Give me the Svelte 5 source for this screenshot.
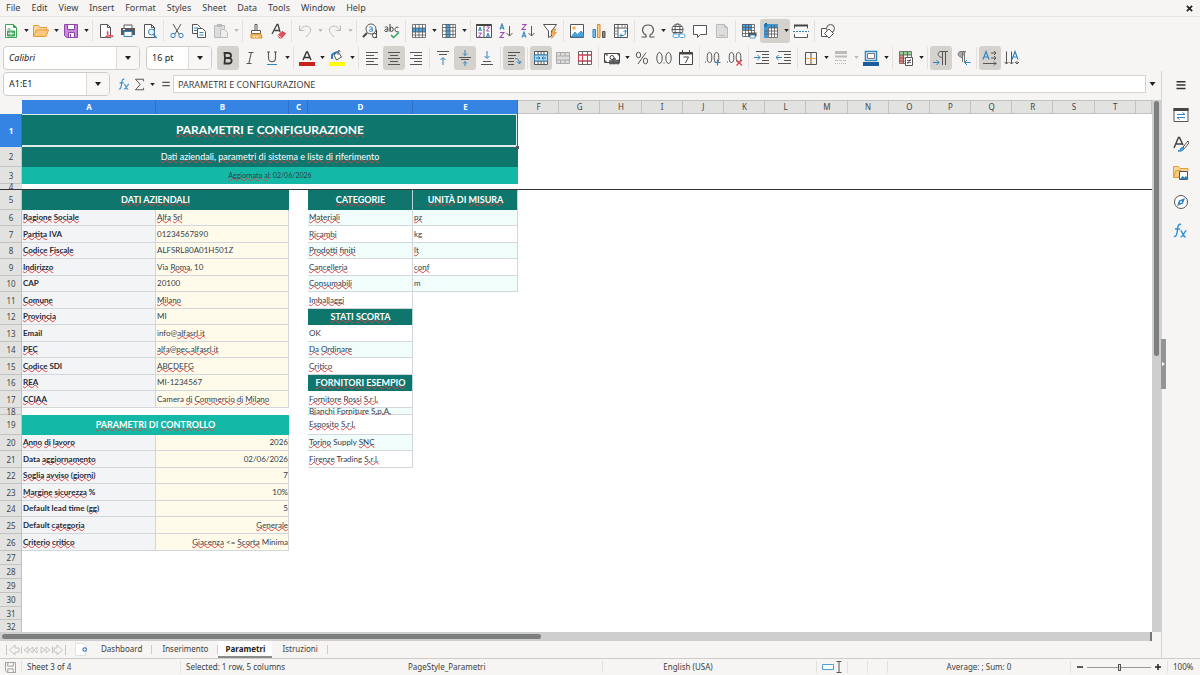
<script>
    const menus = ["File", "Edit", "View", "Insert", "Format", "Styles", "Sheet", "Data", "Tools", "Window", "Help"];

    // 16x16 drawings, keyed by command
    const icons = {
        new: '<path d="M2.500 1.500h8l3 3v10h-11z" fill="#fff" stroke="#3fa35b"/><path d="M10.500 1.500v3h3" fill="#3fa35b" stroke="#3fa35b"/><path d="M4.500 6h3M4.500 8h7v5h-7z" fill="#66b97c" stroke="#2e9c4c"/><path d="M5 10.500h6M8 8.500v4" stroke="#fff" stroke-width=".7"/>',
        open: '<path d="M.5 13V2.500h5l1.500 2h6.500V7" fill="#fcd79a" stroke="#e59a3c"/><path d="M.5 13.500 3.500 7H15.500l-2.500 6.500z" fill="#fbc97e" stroke="#e59a3c"/>',
        save: '<path d="M1.500 1.500h13v13h-11l-2-2z" fill="#c58bd6" stroke="#8e44a8"/><path d="M4.500 1.500h7v5h-7zM5.500 14v-4.500h6V14" fill="#fff" stroke="#8e44a8"/><path d="M7.500 11v3" stroke="#8e44a8"/>',
        pdf: '<path d="M2.500 1.500h7l3 3v10h-10z" fill="#fff" stroke="#555"/><path d="M9.500 1.500v3h3" fill="none" stroke="#555"/><path d="M7 14.500c2-1 3.500-4 3-6-.8-1-1.500 1 0 3s3.500 3 5 2c0-2-4-1-8 1z" fill="#fff" stroke="#d8394a"/>',
        print: '<path d="M4 5V2h8v3" fill="#fff" stroke="#555"/><path d="M1 5h14v7H1z" fill="#5a5a5a"/><path d="M4 8.500h8v5H4z" fill="#fff" stroke="#2f84c0"/><path d="M3 6.500h2" stroke="#fff"/>',
        preview: '<path d="M2.500 1.500h7l3 3v10h-10z" fill="#fff" stroke="#555"/><path d="M9.500 1.500v3h3" fill="none" stroke="#555"/><circle cx="9.500" cy="9" r="3" fill="#e8f4fc" stroke="#2f84c0"/><path d="m11.500 11.500 3 3.500" stroke="#2f84c0" stroke-width="1.500"/>',
        cut: '<path d="M4 1l6 10M12 1 6 11" stroke="#555" fill="none"/><circle cx="4" cy="12.500" r="2.200" fill="none" stroke="#2f84c0"/><circle cx="12" cy="12.500" r="2.200" fill="none" stroke="#2f84c0"/>',
        copy: '<path d="M1.500 1.500h5l3 3v6h-8z" fill="#fff" stroke="#555"/><path d="M3 5h4M3 7.500h3" stroke="#2f84c0"/><path d="M6.500 5.500h5l3 3v6h-8z" fill="#fff" stroke="#555"/><path d="M8.500 9.500h4M8.500 12h4" stroke="#2f84c0"/>',
        paste: '<path d="M1.500 2.500h10v12h-10z" fill="#ddd" stroke="#bbb"/><path d="M4 1h5v3H4z" fill="#bbb"/><path d="M7.500 6.500h4l3 3v5h-7z" fill="#eee" stroke="#bbb"/>',
        brush: '<path d="M7 1.500h2v6H7z" fill="#fff" stroke="#555"/><path d="M3.500 7.500h9v3h-9z" fill="#fff" stroke="#555"/><path d="M3 11h10l1 4H3z" fill="#f9c26b" stroke="#e08a1e"/><path d="M6 15v-2M9 15v-2" stroke="#fff"/>',
        clear: '<path d="m2 11 5-9.500h1L10 9M4.500 7.500h5" fill="none" stroke="#444" stroke-width="1.300"/><path d="m8 12.500 4-4 3.500 2-4 4.500h-2z" fill="#e0555f" stroke="#d03040"/><path d="m8 12.500 3 2" stroke="#fff"/>',
        undo: '<path d="M2.500 2.500v5h5M3 7c3-5 9-5 10.500-1 .7 3-2 5-4.500 8" fill="none" stroke="#bbb"/>',
        redo: '<path d="M13.500 2.500v5h-5M13 7C10 2 4 2 2.500 6c-.7 3 2 5 4.500 8" fill="none" stroke="#bbb"/>',
        find: '<circle cx="9" cy="6" r="5" fill="#fff" stroke="#555"/><path d="m5 10-4 4" stroke="#444" stroke-width="2"/><path d="M7 4.500c1-1 3-1 3.300.5v3.500M10 6C7 6 6.500 8.500 8.500 8.500c1 0 1.500-.5 1.700-1" fill="none" stroke="#2f84c0"/><path d="M14.500 7v8" stroke="#444"/><ellipse cx="12.500" cy="12.500" rx="2" ry="2.300" fill="#fff" stroke="#444"/>',
        spell: '<path d="M.8 4.500c1-1 3-1 3 .6V8.500M3.800 6C0 6 0 8.500 2 8.500q1.300 0 1.800-1M6 1v7.500M14.500 4.500c-2-1-3.500 0-3.500 2s1.500 3 3.500 2" fill="none" stroke="#444"/><ellipse cx="7.600" cy="6.300" rx="1.600" ry="2.200" fill="none" stroke="#444"/><path d="m7 12 2.500 2.500L15 9.500" fill="none" stroke="#2fa866" stroke-width="1.600"/>',
        row: '<path d="M1.500 1.500h13v13h-13z" fill="#fff"/><path d="M1 5h14v4H1z" fill="#4aa3df"/><path d="M1.500 1.500h13v13h-13zM1.500 5h13M1.500 9h13M1.500 12h13M4.500 1.500v13M8 1.500v13M11.500 1.500v13" fill="none" stroke="#555" stroke-width=".8"/>',
        col: '<path d="M1.500 1.500h13v13h-13z" fill="#fff"/><path d="M5 1h4v14H5z" fill="#4aa3df"/><path d="M1.500 1.500h13v13h-13zM5 1.500v13M9 1.500v13M12 1.500v13M1.500 4.500h13M1.500 8h13M1.500 11.500h13" fill="none" stroke="#555" stroke-width=".8"/>',
        sort: '<path d="M.5 1.500h15v13H.5zM8 1.500v13" fill="#fff" stroke="#555"/><path d="M.5 2h15" stroke="#444" stroke-width="2"/><path d="m2.500 8 1.500-4 1.500 4M3 7h2M10.500 14l1.500-4 1.500 4M11 13h2" fill="none" stroke="#2f84c0"/><path d="M2.500 10h3l-3 4h3M10.500 4h3l-3 4h3" fill="none" stroke="#a347ba"/>',
        asc: '<path d="M2 6.500 4 1l2 5.500M2.500 5h3" fill="none" stroke="#2f84c0" stroke-width="1.100"/><path d="M2 9.500h4l-4 5h4" fill="none" stroke="#a347ba" stroke-width="1.100"/><path d="M11.500 3v10M8.500 10l3 3 3-3" fill="none" stroke="#555"/>',
        desc: '<path d="M2 1.500h4l-4 5h4" fill="none" stroke="#a347ba" stroke-width="1.100"/><path d="M2 14.500 4 9l2 5.500M2.500 13h3" fill="none" stroke="#2f84c0" stroke-width="1.100"/><path d="M11.500 3v10M8.500 10l3 3 3-3" fill="none" stroke="#555"/>',
        filter: '<path d="M1.500 1.500h13L9.500 8v5l-3 1.500V8z" fill="#fff" stroke="#555"/><path d="M12 6 9 11h2.500L9.500 15.500 14.500 9.500H12L14 6z" fill="#f6b25b" stroke="#e08a1e" stroke-width=".7"/>',
        image: '<path d="M1.500 1.500h13v13h-13z" fill="#fff" stroke="#555"/><circle cx="5" cy="5" r="1.800" fill="#f3b057"/><path d="m2 14 4-5 2.500 2.500L12 8l2.500 3v3z" fill="#4aa3df" stroke="#2f84c0" stroke-width=".7"/>',
        chart: '<path d="M2 6.500h2.500v8H2z" fill="#7ec0ee" stroke="#2f84c0"/><path d="M6.500 1.500H9v13H6.500z" fill="#fcd08b" stroke="#e08a1e"/><path d="M11.500 8.500H14v6h-2.500z" fill="#888" stroke="#555"/>',
        pivot: '<path d="M1.500 1.500h13v13h-13zM1.500 5h13M5 1.500v13" fill="#fff" stroke="#555"/><path d="M9 1.500V5M12 1.500V5M1.500 8H5M1.500 11H5" stroke="#888"/><path d="M7 12.500h3c2 0 2.500-1.500 2.500-4.500M9 10.500 7 12.500l2 2M10.500 9l2-2 2 2" fill="none" stroke="#2f84c0"/>',
        omega: '<path d="M1.500 14H6v-2C.5 9 2 2 8 2s7.500 7 2 10v2h4.500" fill="none" stroke="#555" stroke-width="1.200"/>',
        link: '<circle cx="7.500" cy="6.500" r="5.500" fill="#fff" stroke="#555"/><ellipse cx="7.500" cy="6.500" rx="2.500" ry="5.500" fill="none" stroke="#555"/><path d="M2 6.500h11M3 3.500h9M3 9.500h9" stroke="#555"/><rect x="3" y="11" width="6" height="3.500" rx="1.700" fill="#fff" stroke="#4aa3df"/><rect x="9" y="11" width="6" height="3.500" rx="1.700" fill="#fff" stroke="#4aa3df"/>',
        comment: '<path d="M1.500 2.500h13v9h-6l-3 3v-3h-4z" fill="#fff" stroke="#555"/>',
        header: '<path d="M2.500 1.500h8l3 3v10h-11z" fill="#ddd" stroke="#bbb"/><path d="M10.500 1.500v3h3M5 12.500h6" fill="none" stroke="#bbb"/>',
        area: '<path d="M1.500 1.500h12v12h-12z" fill="#fff"/><path d="M1 1h9v6H1z" fill="#4aa3df"/><path d="M1.500 1.500h12v12h-12zM1.500 4.500h12M1.500 7.500h12M1.500 10.500h12M4.500 1.500v12M7.500 1.500v12M10.500 1.500v12" fill="none" stroke="#555" stroke-width=".8"/><path d="M7.500 9.500h8v4h-8z" fill="#555"/><path d="M9 12h5v3H9z" fill="#fff" stroke="#2f84c0" stroke-width=".8"/>',
        freeze: '<path d="M1.500 1.500h13v13h-13z" fill="#fff"/><path d="M1 1h14v4H1zM1 1h4v14H1z" fill="#3f97d3"/><path d="M5.500 5h9v9.500h-9zM8.500 2v12M11.500 2v12M1.500 8h13M1.500 11h13" fill="none" stroke="#555" stroke-width=".8"/><path d="m3 0 0 3M1.500 1.500 3 0l1.500 1.500M1 3h3" fill="none" stroke="#165f93"/>',
        split: '<path d="M1.500 5.500v-3h13v3M1.500 11v3.500h13V11" fill="#fff" stroke="#555"/><path d="M1 2.500h14" stroke="#444" stroke-width="2"/><path d="M0 8.500h16" stroke="#2f84c0" stroke-dasharray="2 1"/>',
        shapes: '<path d="M1.500 5.500h8v8h-8z" fill="#fff" stroke="#555"/><circle cx="10.500" cy="5.500" r="4" fill="#f6f5f4" stroke="#555"/><path d="m9 6 4.500 4.500L9 15l-4.500-4.500z" fill="#fff" stroke="#555"/>',
        bold: '<path d="M4.500 3H8c4 0 4 5 .5 5H5zM5 8h3.500c4.500 0 4 5.500 0 5.500h-4z" fill="none" stroke="#333" stroke-width="1.800"/>',
        italic: '<path d="M6.500 2.500h5M4.500 13.500h5M9.300 2.500l-2.500 11" fill="none" stroke="#555" stroke-width="1.100"/>',
        underline: '<path d="M4.500 2v6c0 5 7 5 7 0V2M3 2h3M10 2h3" fill="none" stroke="#555" stroke-width="1.100"/><path d="M3 14.500h10" stroke="#2f84c0"/>',
        color: '<path d="M4 10 7.500 2h1L12 10M5.500 7.500h5" fill="none" stroke="#333" stroke-width="1.400"/><path d="M0 12h16v4H0z" fill="#c9211e"/>',
        fill: '<path d="M0 12h16v4H0z" fill="#ff0"/><path d="m5 5 4-3.500L12.500 7l-5 3z" fill="#fff" stroke="#555"/><path d="M9 5V1c1-1.500 2-.5 2 1" fill="none" stroke="#555"/><path d="M3 9V5c0-1.500 3-2 5-3" fill="none" stroke="#1e73b5" stroke-width="1.800"/>',
        left: '<path d="M2 2.500h12M2 5.500h8M2 8.500h12M2 11.500h8M2 14.500h12" stroke="#555"/>',
        center: '<path d="M2 2.500h12M4 5.500h8M2 8.500h12M4 11.500h8M2 14.500h12" stroke="#555"/>',
        right: '<path d="M2 2.500h12M6 5.500h8M2 8.500h12M6 11.500h8M2 14.500h12" stroke="#555"/>',
        top: '<path d="M2 1.500h12M4 4.500h8" stroke="#555"/><path d="M8 15V8M5.500 10 8 7.500l2.500 2.500" fill="none" stroke="#2f84c0"/>',
        middle: '<path d="M2 7.500h12M4 9.500h8" stroke="#555"/><path d="M8 0v5.500M6 3.500l2 2 2-2M8 16.500v-5M6 13.500l2-2 2 2" fill="none" stroke="#2f84c0"/>',
        bottom: '<path d="M4 11.500h8M2 14.500h12" stroke="#555"/><path d="M8 1v7M5.500 6 8 8.500 10.500 6" fill="none" stroke="#2f84c0"/>',
        wrap: '<path d="M2 2.500h12M2 5.500h8M2 8.500h6M2 11.500h6M2 14.500h6" stroke="#555"/><path d="M9 8.500c3 0 4 1 4.500 5M11 11.500l2.500 2.500 1.500-3" fill="none" stroke="#2f84c0"/>',
        merge: '<path d="M1.500 1.500h13v13h-13z" fill="#fff" stroke="#555"/><path d="M1.500 5h13M1.500 11h13M5 1.500V5M11 1.500V5M5 11v3.500M8 11v3.500M11 11v3.500M8 1.500V5" stroke="#555"/><path d="M1.500 5h13v6h-13z" fill="#b5dbf5" stroke="#2f84c0"/><path d="M3 8h4M9 8h4M5.500 6.500 7 8 5.500 9.500M10.500 6.500 9 8l1.500 1.500" fill="none" stroke="#1e73b5"/>',
        center2: '<path d="M1.500 2.500h13v11h-13zM1.500 6h13M1.500 10h13M5.500 2.500V6M10 2.500V6M5.500 10v3.500M10 10v3.500" fill="#ddd" stroke="#aaa"/>',
        unmerge: '<path d="M1.500 1.500h13v13h-13zM1.500 5h13M1.500 11h13M5.500 1.500v13M10.500 1.500v13" fill="#fff" stroke="#666"/><path d="M1.500 5h13v6h-13zM5.500 5v6M10.500 5v6" fill="none" stroke="#d8394a"/>',
        money: '<path d="M.5 3.500h15v9H.5z" fill="#fff" stroke="#444"/><circle cx="8" cy="7.500" r="2" fill="none" stroke="#444"/><path d="M1 4h2v2M15 6V4h-2M1 10v2h2" fill="none" stroke="#444"/><path d="M5.500 10.500h3V14h-3zM9 8.500h2.500V14H9zM12.500 10H15v4h-2.500z" fill="#666" stroke="#444" stroke-width=".6"/>',
        percent: '<ellipse cx="4.500" cy="5" rx="2.200" ry="2.800" fill="none" stroke="#555"/><ellipse cx="11.500" cy="11" rx="2.200" ry="2.800" fill="none" stroke="#555"/><path d="m12 2.500-8 11.500" stroke="#555"/>',
        number: '<ellipse cx="3.500" cy="8" rx="2.700" ry="5.500" fill="none" stroke="#555"/><ellipse cx="12.500" cy="8" rx="2.700" ry="5.500" fill="none" stroke="#555"/><path d="M7.500 12.500h1v1h-1z" fill="#444"/>',
        date: '<path d="M1.500 2.500h13v12h-13z" fill="#fff" stroke="#444"/><path d="M1.500 3.500h13" stroke="#444" stroke-width="2"/><path d="M4.500 0v3M11.500 0v3M5.500 7h5l-3 6" fill="none" stroke="#444"/>',
        addDec: '<path d="M0 11.500h1v1H0z" fill="#444"/><ellipse cx="4.500" cy="7.500" rx="2.300" ry="5" fill="none" stroke="#555"/><ellipse cx="11.500" cy="7.500" rx="2.300" ry="5" fill="none" stroke="#555"/><path d="M9.500 12.500h6M12.500 9.500v6" stroke="#2f84c0" stroke-width="1.200"/>',
        delDec: '<path d="M0 11.500h1v1H0z" fill="#444"/><ellipse cx="4.500" cy="7.500" rx="2.300" ry="5" fill="none" stroke="#555"/><ellipse cx="11.500" cy="7.500" rx="2.300" ry="5" fill="none" stroke="#555"/><path d="m9.500 10 5.500 5.500M15 10l-5.500 5.500" stroke="#e0404a" stroke-width="1.200"/>',
        indent: '<path d="M2 1.500h13M8 4.500h7M8 7.500h7M8 10.500h7M2 13.500h13" stroke="#555"/><path d="M0 7.500h6M3.500 5 6 7.500 3.500 10" fill="none" stroke="#2f84c0"/>',
        outdent: '<path d="M2 1.500h13M8 4.500h7M8 7.500h7M8 10.500h7M2 13.500h13" stroke="#555"/><path d="M0 7.500h6M2.500 5 0 7.500 2.500 10" fill="none" stroke="#2f84c0"/>',
        borders: '<path d="M2.500 2.500h11v12h-11zM8 2.500v12" fill="none" stroke="#555"/><path d="M3 8.500h10M8 9v5" stroke="#f0a24a"/>',
        lines: '<path d="M2 2.500h12" stroke="#bbb" stroke-width="3"/><path d="M2 6.500h12" stroke="#bbb" stroke-width="2"/><path d="M2 10.500h12" stroke="#bbb" stroke-dasharray="3 1"/><path d="M2 13.500h12" stroke="#bbb" stroke-dasharray="1 1"/>',
        lineColor: '<path d="M2.500 1.500h11v9h-11z" fill="#fff" stroke="#2f84c0" stroke-width="1.500"/><path d="M4.500 3.500h7v5h-7z" fill="#fff" stroke="#777"/><path d="M0 12h16v4H0z" fill="#1c5c99"/>',
        cond: '<path d="M1.500 1.500h12v12h-12z" fill="#fff"/><path d="M2 2h11v3H2z" fill="#8ed08f"/><path d="M2 5h4v8H2z" fill="#f0837f"/><path d="M1.500 1.500h12v12h-12zM1.500 5h12M1.500 8h12M1.500 11h12M5.500 1.500v12M9.500 1.500v12" fill="none" stroke="#555" stroke-width=".8"/><path d="M7.500 7.500h7v8h-7z" fill="#fff" stroke="#555"/><path d="M9 10.500h4M9 12.500h4M12.500 9l-3 5" stroke="#444" stroke-width=".8"/>',
        ltr: '<path d="M9.500 1.500V15M12.500 1.500V15M15 1.500H8c-4 0-4 6 1.500 6" fill="none" stroke="#555"/><path d="M0 12.500h6M3.500 10 6 12.500 3.500 15" fill="none" stroke="#2f84c0"/>',
        rtl: '<path d="M7.500 1.500V12M9.500 1.500V12M11 1.500H6c-4 0-4 6 1.500 6" fill="#aaa" stroke="#777"/><path d="M9.500 12.500h6M12 10l-2.500 2.500L12 15" fill="none" stroke="#2f84c0"/>',
        textLtr: '<path d="M1 9.500 4 1.500l3 8M2 7h4" fill="none" stroke="#2f84c0" stroke-width="1.200"/><path d="M9 3h5M12 1l2 2-2 2M9 8h5M12 6l2 2-2 2M1 13.500h13M12 11.500l2 2-2 2" fill="none" stroke="#555"/>',
        textTtb: '<path d="m8 9.500 3-8 3 8M9 7h4" fill="none" stroke="#2f84c0" stroke-width="1.200"/><path d="M2.500 1.500V14M.5 12l2 2 2-2M7.500 1.500V14M5.500 12l2 2 2-2M13 11v3M11 12l2 2 2-2" fill="none" stroke="#555"/>',
        fx: '<path d="M8 1.500c-3-1-3 2-3.500 5S4 14 1 13.500M2 6h5M7.500 7.500c2 0 2 6.500 5 6.500M13.500 7.500c-2 0-3 6.500-6 6.500" fill="none" stroke="#2f8fd5" stroke-width="1.400"/>',
        sigma: '<path d="M13 4V1.500H3L9 8l-6 6.500h10V12" fill="none" stroke="#555" stroke-width="1.200"/>',
        equals: '<path d="M2 5.500h12M2 10.500h12" stroke="#555" stroke-width="2"/>',
        burger: '<path d="M2 3.500h12M2 8h12M2 12.500h12" stroke="#333" stroke-width="2"/>',
        props: '<path d="M1 1.500h14v13H1z" fill="#fff" stroke="#555"/><path d="M.5 2.500h15" stroke="#444" stroke-width="3"/><path d="M4 7.500h8M4 10.500h8M9.500 5.500l2.500 2M6.500 12.500 4 10.500" stroke="#2f84c0"/>',
        stylesPane: '<path d="m1 12 4.500-10.500h1L10 9M3 8h6" fill="none" stroke="#444" stroke-width="1.500"/><path d="m15 5-5 6 1.500 1.500L16 7z" fill="#fff" stroke="#555"/><path d="M5 15c3 0 2-4 5-3.500 2 1 0 4.500-5 3.500z" fill="#4aa3df" stroke="#2f84c0"/>',
        gallery: '<path d="M.5 12.500v-11h5l1.500 2h8V6" fill="#fcd79a" stroke="#e59a3c"/><path d="M.5 12.500 3 5.500h5v7z" fill="#fbc97e" stroke="#e59a3c"/><path d="M6.500 6.500h8v8h-8z" fill="#fff" stroke="#555"/><path d="m7 14 2.500-3 2 1.500L13 11l1.500 2v1.500z" fill="#2f84c0"/>',
        compass: '<circle cx="8" cy="8" r="6.500" fill="#fff" stroke="#555"/><path d="m12 4-2 5.500L4 12l2-5.500z" fill="#2f84c0"/><circle cx="8" cy="8" r="1" fill="#fff"/>',
    };

    // "|" is a separator; [name, flags]: d = drop-down arrow, a = active, x = disabled
    const standardBar = [
        ["new", "d"], ["open", "d"], ["save", "d"], "|", ["pdf"], ["print"], ["preview"], "|",
        ["cut"], ["copy"], ["paste", "dx"], "|", ["brush"], ["clear"], "|", ["undo", "dx"], ["redo", "dx"], "|",
        ["find"], ["spell"], "|", ["row", "d"], ["col", "d"], "|", ["sort"], ["asc"], ["desc"], ["filter"], "|",
        ["image"], ["chart"], ["pivot"], "|", ["omega", "d"], ["link"], ["comment"], ["header", "x"], "|",
        ["area"], ["freeze", "da"], ["split"], "|", ["shapes"],
    ];
    const formatBar = [
        ["bold", "a"], ["italic"], ["underline", "d"], "|", ["color", "d"], ["fill", "d"], "|",
        ["left"], ["center", "a"], ["right"], "|", ["top"], ["middle", "a"], ["bottom"], "|", ["wrap", "a"], "|",
        ["merge", "a"], ["center2", "x"], ["unmerge"], "|", ["money", "d"], ["percent"], ["number"], ["date"], "|",
        ["addDec"], ["delDec"], "|", ["indent"], ["outdent"], "|", ["borders", "d"], ["lines", "dx"], ["lineColor", "d"], "|",
        ["cond", "d"], "|", ["ltr", "a"], ["rtl"], "|", ["textLtr", "a"], ["textTtb"],
    ];
    const sidePanels = ["burger", "props", "stylesPane", "gallery", "compass", "fx"];

    const mainCols = ["A", "B", "C", "D", "E"];
    const otherCols = "FGHIJKLMNOPQRST".split("");

    // cells are [text, class, colspan]; words between underscores fail the spell check
    const none = ["", ""];
    const label = (t) => [t, "label"];
    const value = (t) => [t, "value"];
    const num = (t) => [t, "value end"];
    const mint = (t) => [t, "mint"];
    const plain = (t) => [t, "plain"];
    const head = (t) => [t, "head"];

    const rows = [
        [33, ["_PARAMETRI_ E _CONFIGURAZIONE_", "title", 5]],
        [20, ["_Dati_ _aziendali_, _parametri_ _di_ _sistema_ e _liste_ _di_ _riferimento_", "subtitle", 5]],
        [17, ["_Aggiornato_ _al_: 02/06/2026", "updated", 5]],
        [6, ["", "", 5]],
        [20, ["_DATI_ _AZIENDALI_", "section", 2], none, head("_CATEGORIE_"), head("_UNITÀ_ DI _MISURA_")],
        [16, label("_Ragione_ _Sociale_"), value("_Alfa_ _Srl_"), none, mint("_Materiali_"), mint("_pz_")],
        [17, label("_Partita_ IVA"), value("01234567890"), none, plain("_Ricambi_"), plain("kg")],
        [16, label("_Codice_ _Fiscale_"), value("ALFSRL80A01H501Z"), none, mint("_Prodotti_ _finiti_"), mint("_lt_")],
        [17, label("_Indirizzo_"), value("Via _Roma_, 10"), none, plain("_Cancelleria_"), plain("_conf_")],
        [16, label("CAP"), value("20100"), none, mint("_Consumabili_"), mint("m")],
        [17, label("_Comune_"), value("_Milano_"), none, plain("_Imballaggi_"), none],
        [16, label("_Provincia_"), value("MI"), none, head("_STATI_ _SCORTA_"), none],
        [17, label("Email"), value("info@_alfasrl.it_"), none, plain("OK"), none],
        [16, label("_PEC_"), value("_alfa_@_pec.alfasrl.it_"), none, mint("_Da_ _Ordinare_"), none],
        [17, label("_Codice_ SDI"), value("_ABCDEFG_"), none, plain("_Critico_"), none],
        [16, label("_REA_"), value("MI-1234567"), none, head("_FORNITORI_ _ESEMPIO_"), none],
        [17, label("_CCIAA_"), value("Camera _di_ _Commercio_ _di_ _Milano_"), none, plain("_Fornitore_ _Rossi_ _S.r.l._"), none],
        [7, none, none, none, mint("_Bianchi_ _Forniture_ _S.p.A._"), none],
        [20, ["_PARAMETRI_ DI _CONTROLLO_", "section teal", 2], none, plain("_Esposito_ _S.r.l._"), none],
        [16, label("_Anno_ _di_ _lavoro_"), num("2026"), none, mint("_Torino_ Supply _SNC_"), none],
        [17, label("Data _aggiornamento_"), num("02/06/2026"), none, plain("_Firenze_ Trading _S.r.l._"), none],
        [16, label("_Soglia_ _avviso_ (_giorni_)"), num("7"), ["", "", 3]],
        [17, label("_Margine_ _sicurezza_ %"), num("10%"), ["", "", 3]],
        [16, label("Default lead time (_gg_)"), num("5"), ["", "", 3]],
        [17, label("Default _categoria_"), num("_Generale_"), ["", "", 3]],
        [17, label("_Criterio_ _critico_"), num("_Giacenza_ <= _Scorta_ Minima"), ["", "", 3]],
        [14, ["", "", 5]],
        [14, ["", "", 5]],
        [14, ["", "", 5]],
        [14, ["", "", 5]],
        [13, ["", "", 5]],
        [14, ["", "", 5]],
    ];

    const tabs = ["Dashboard", "Inserimento", "Parametri", "Istruzioni"];
    let current = $state("Parametri");
    let fontName = $state("Calibri");
    let fontSize = $state("16 pt");
    let nameBox = $state("A1:E1");
    let formula = $state("PARAMETRI E CONFIGURAZIONE");
    let zoom = $state(50);
</script>

{#snippet icon(name)}
    <svg class="icon" viewBox="0 0 16 16" fill="none" aria-hidden="true">{@html icons[name]}</svg>
{/snippet}

{#snippet arrow()}
    <svg class="tri" viewBox="0 0 6 4" aria-hidden="true"><path d="M0 0h6L3 4z" fill="currentColor" /></svg>
{/snippet}

{#snippet tools(items)}
    {#each items as item}
        {#if item === "|"}
            <span class="sep"></span>
        {:else}
            {@const flags = item[1] ?? ""}
            <span class="tool" class:active={flags.includes("a")}>
                <button class="cmd" aria-label={item[0]} disabled={flags.includes("x")}>{@render icon(item[0])}</button>
                {#if flags.includes("d")}
                    <button class="drop" aria-label="{item[0]} options" disabled={flags.includes("x")}>{@render arrow()}</button>
                {/if}
            </span>
        {/if}
    {/each}
{/snippet}

<div class="app">
    <nav class="menubar">
        {#each menus as menu}
            <button>{menu}</button>
        {/each}
        <button class="close" aria-label="Close"><svg viewBox="0 0 8 8"><path d="m1 1 6 6M7 1 1 7" stroke="#222" stroke-width="2" /></svg></button>
    </nav>

    <div class="toolbar">{@render tools(standardBar)}</div>

    <div class="toolbar format">
        <div class="combo font">
            <input class="italic" aria-label="Font name" bind:value={fontName} />
            <button aria-label="Choose font">{@render arrow()}</button>
        </div>
        <div class="combo size">
            <input aria-label="Font size" bind:value={fontSize} />
            <button aria-label="Choose size">{@render arrow()}</button>
        </div>
        {@render tools(formatBar)}
    </div>

    <div class="work">
        <main>
            <div class="formula">
                <div class="combo name">
                    <input aria-label="Name box" bind:value={nameBox} />
                    <button aria-label="Choose range">{@render arrow()}</button>
                </div>
                <button class="fbtn" aria-label="Function wizard">{@render icon("fx")}</button>
                <button class="fbtn" aria-label="Sum">{@render icon("sigma")}</button>
                <button class="drop" aria-label="Sum options">{@render arrow()}</button>
                <button class="fbtn equals" aria-label="Formula">{@render icon("equals")}</button>
                <input class="line" aria-label="Formula input" bind:value={formula} />
                <button class="expand" aria-label="Expand formula bar">{@render arrow()}</button>
            </div>

            <div class="grid">
                <div class="sheet">
                    <table>
                        <colgroup>
                            <col class="c-row" /><col class="c-a" /><col class="c-b" /><col class="c-c" /><col class="c-d" /><col class="c-e" />
                            {#each otherCols as _}<col />{/each}
                            <col class="c-last" />
                        </colgroup>
                        <thead>
                            <tr>
                                <td class="corner"></td>
                                {#each mainCols as c}<th class="on">{c}</th>{/each}
                                {#each otherCols as c}<th>{c}</th>{/each}
                                <td class="rest"></td>
                            </tr>
                        </thead>
                        <tbody>
                            {#each rows as [height, ...cells], i}
                                <tr class:frozen={i === 3} style:--h="{height}px">
                                    <th class:on={i === 0}><div class="cell">{i + 1}</div></th>
                                    {#each cells as [text, kind, span]}
                                        <td colspan={span ?? 1} class={kind}>
                                            <div class="cell"><span>{#each text.split("_") as part, k}{#if k % 2}<u>{part}</u>{:else}{part}{/if}{/each}</span></div>
                                        </td>
                                    {/each}
                                    <td colspan="16"></td>
                                </tr>
                            {/each}
                        </tbody>
                    </table>
                </div>
                <div class="vscroll"><div></div></div>
            </div>
            <div class="hscroll"><div></div></div>

            <div class="tabs">
                <button class="navs" aria-label="Scroll sheets">
                    <svg viewBox="0 0 62 12" fill="none" stroke="#c4c4c2">
                        <path d="M1.500 1v10M10 1 4.500 6 10 11V8h4V4h-4zM16.500 2.500v7M23 3l-4 3 4 3zM28 3l-4 3 4 3zM32 3l-3 3 3 3zM36 3l4 3-4 3zM41 3l4 3-4 3zM47.500 2.500v7M52 1l5.500 5L52 11V8h-3V4h3zM60.500 1v10" />
                    </svg>
                </button>
                <button class="add" aria-label="Add sheet">
                    <svg viewBox="0 0 14 14">
                        <path d="M.5 .5h9l2 2v11H.5z" fill="#fff" stroke="#ddd" />
                        <circle cx="10.500" cy="7" r="2.500" fill="#3b74b8" />
                        <path d="M9 7h3M10.500 5.500v3" stroke="#fff" />
                    </svg>
                </button>
                {#each tabs as tab}
                    <button class="tab" class:current={tab === current} onclick={() => (current = tab)}>{tab}</button>
                {/each}
            </div>
        </main>

        <aside>
            <button class="handle" aria-label="Hide sidebar"></button>
            {#each sidePanels as panel}
                <button class="panel" aria-label={panel}>{@render icon(panel)}</button>
            {/each}
        </aside>
    </div>

    <footer>
        <span>
            <svg class="saved" viewBox="0 0 12 12" fill="none" stroke="#999"><path d="M.5.5h11v11h-9l-2-2zM3 .5v4h6v-4M3 11.500v-4h6v4" /></svg>
        </span>
        <span>Sheet 3 of 4</span>
        <span class="open">Selected: 1 row, 5 columns</span>
        <span>PageStyle_Parametri</span>
        <span class="language">English (USA)</span>
        <span>
            <svg class="mode" viewBox="0 0 20 12" fill="none"><path d="M.5 3.500h11v5H.5z" fill="#fff" stroke="#4a9fd0" /><path d="M14.500.5h5M14.500 11.500h5M17 .5v11" stroke="#555" /></svg>
        </span>
        <span></span>
        <span></span>
        <span class="sum">Average: ; Sum: 0</span>
        <span class="zoom">
            <button aria-label="Zoom out"><svg viewBox="0 0 8 8"><path d="M1 4h6" stroke="#222" stroke-width="1.500" /></svg></button>
            <input type="range" min="0" max="100" aria-label="Zoom" bind:value={zoom} />
            <button aria-label="Zoom in"><svg viewBox="0 0 8 8"><path d="M1 4h6M4 1v6" stroke="#222" stroke-width="1.500" /></svg></button>
        </span>
        <span class="open">100%</span>
    </footer>
</div>

<style>
    :global(body) {
        background: #f6f5f4;
    }
    .app {
        display: flex;
        flex-direction: column;
        height: 100vh;
        overflow: hidden;
        color: #3d3d3d;
        font: 8px/12px "Noto Sans", sans-serif;
    }
    button,
    input {
        margin: 0;
        padding: 0;
        border: 0;
        background: none;
        color: inherit;
        font: inherit;
        box-sizing: border-box;
        min-width: 0;
    }
    svg {
        display: block;
    }

    .menubar {
        display: flex;
        align-items: center;
        gap: 11px;
        height: 17px;
        box-sizing: border-box;
        padding: 0 7px 0 6px;
        border-bottom: 1px solid #e6e5e3;
        font-size: 9px;
    }
    .close {
        margin-left: auto;
    }
    .close svg {
        width: 7px;
        height: 7px;
    }

    .toolbar {
        display: flex;
        align-items: center;
        height: 27px;
    }
    .toolbar.format {
        padding-left: 3px;
    }
    .tool {
        display: flex;
        align-items: center;
        height: 24px;
        border-radius: 3px;
    }
    .tool.active {
        background: #d5d1cd;
    }
    .cmd {
        display: flex;
        justify-content: center;
        width: 22px;
    }
    .icon {
        width: 16px;
        height: 16px;
    }
    .drop {
        display: flex;
        justify-content: center;
        width: 8px;
        color: #222;
    }
    .drop:disabled {
        color: #bbb;
    }
    .tri {
        width: 5px;
        height: 3px;
    }
    .sep {
        width: 1px;
        height: 22px;
        margin: 0 2px;
        background: #e2e1df;
    }

    .combo {
        display: flex;
        height: 24px;
        box-sizing: border-box;
        border: 1px solid #cfccc8;
        border-radius: 4px;
        background: #fff;
        color: #222;
        font-size: 9px;
        overflow: hidden;
    }
    .combo input {
        flex: 1;
        padding-left: 5px;
    }
    .combo .italic {
        font-style: italic;
    }
    .combo button {
        display: flex;
        align-items: center;
        justify-content: center;
        width: 23px;
        border-left: 1px solid #dcdad7;
        background: #f8f7f6;
    }
    .combo .tri {
        width: 8px;
        height: 4px;
    }
    .font {
        width: 137px;
        margin-right: 6px;
    }
    .size {
        width: 66px;
        margin-right: 5px;
    }
    .name {
        width: 107px;
        margin-right: 7px;
    }

    .work {
        display: flex;
        flex: 1;
        min-height: 0;
    }
    main {
        display: flex;
        flex: 1;
        flex-direction: column;
        min-width: 0;
    }
    .formula {
        display: flex;
        align-items: center;
        height: 29px;
        box-sizing: border-box;
        padding: 0 5px 3px 3px;
    }
    .fbtn {
        display: flex;
        justify-content: center;
        width: 15px;
    }
    .fbtn .icon {
        width: 13px;
        height: 13px;
    }
    .formula .drop {
        width: 11px;
    }
    .fbtn.equals .icon {
        width: 10px;
        height: 10px;
    }
    .line {
        flex: 1;
        height: 18px;
        padding: 0 4px;
        border: 1px solid #d5d2cf;
        background: #fff;
        font-size: 9px;
    }
    .expand {
        padding-left: 3px;
        color: #222;
    }
    .expand .tri {
        width: 7px;
        height: 4px;
    }

    .grid {
        display: flex;
        flex: 1;
        min-height: 0;
    }
    .sheet {
        flex: 1;
        min-width: 0;
        overflow: hidden;
        background: #fff;
    }
    table {
        width: 100%;
        table-layout: fixed;
        border-collapse: separate;
        border-spacing: 0;
    }
    .c-row {
        width: 22px;
    }
    .c-a {
        width: 134px;
    }
    .c-b {
        width: 133px;
    }
    .c-c {
        width: 19px;
    }
    .c-d,
    .c-e {
        width: 105px;
    }
    .c-last {
        width: 16px;
    }
    th,
    td {
        padding: 0;
        text-align: left;
    }
    thead th,
    .corner,
    .rest {
        height: 14px;
        line-height: 12px;
    }
    th,
    .rest {
        background: #e2e2e1;
        box-shadow: inset -1px -1px #c2c2c1, inset 0 1px #c2c2c1;
        color: #444;
        font-weight: normal;
        text-align: center;
    }
    .corner {
        background: #f6f5f4;
    }
    th.on {
        background: #3584e4;
        box-shadow: inset -1px 0 #2d72c6;
        color: #fff;
        font-weight: bold;
    }
    .cell {
        display: flex;
        align-items: center;
        height: var(--h);
        box-sizing: border-box;
        white-space: nowrap;
    }
    tbody th {
        box-shadow: inset -1px -1px #c2c2c1;
    }
    tbody th .cell {
        justify-content: center;
    }
    tbody td {
        color: #333c4a;
        font-family: Lato, sans-serif;
        font-size: 8px;
    }
    tbody td .cell {
        padding-bottom: 1px;
        overflow: hidden;
    }
    .frozen td,
    .frozen th {
        box-shadow: inset 0 -1px #333;
    }
    u {
        text-decoration: underline wavy #e04040 1px;
        text-underline-offset: -1px;
        text-decoration-skip-ink: none;
    }
    .title,
    .subtitle,
    .head,
    .section {
        background: #0f766e;
        color: #fff;
    }
    .title .cell,
    .subtitle .cell,
    .updated .cell,
    .head .cell,
    .section .cell {
        justify-content: center;
    }
    .title {
        position: relative;
        box-shadow: inset -1px 0 #555, inset -2px -2px #dfeeec, inset 0 1px #dfeeec;
        font-size: 12px;
        font-weight: bold;
    }
    .title::after {
        content: "";
        position: absolute;
        right: -1px;
        bottom: -2px;
        width: 3px;
        height: 3px;
        background: #555;
    }
    .subtitle {
        font-size: 9px;
    }
    .updated {
        font-size: 7px;
    }
    .updated,
    .section.teal {
        background: #14b8a6;
    }
    .head,
    .section {
        font-size: 9px;
        font-weight: bold;
    }
    .head {
        box-shadow: inset -1px 0 #b9d8d5;
    }
    .label,
    .value,
    .mint,
    .plain {
        box-shadow: inset -1px -1px #d3d6da;
    }
    .label .cell,
    .value .cell,
    .mint .cell,
    .plain .cell {
        padding: 0 1px 2px;
    }
    .label {
        background: #f3f4f6;
        color: #1f2937;
        font-weight: bold;
    }
    .value {
        background: #fffbeb;
    }
    .end .cell {
        justify-content: flex-end;
    }
    .mint {
        background: #f0fdfa;
    }

    .vscroll {
        width: 9px;
        background: #cecece;
    }
    .vscroll div {
        width: 5px;
        height: 48%;
        margin: 1px 2px;
        border-radius: 3px;
        background: #7d7f7e;
    }
    .hscroll {
        height: 9px;
        padding: 2px;
        box-sizing: border-box;
        margin-right: 9px;
        border-right: 2px solid #777;
        background: #cecece;
    }
    .hscroll div {
        width: 47%;
        height: 5px;
        border-radius: 3px;
        background: #7d7f7e;
    }

    .tabs {
        display: flex;
        height: 17px;
        padding-left: 5px;
    }
    .navs svg {
        width: 62px;
        height: 12px;
    }
    .add {
        padding: 0 3px 0 8px;
    }
    .add svg {
        width: 13px;
        height: 13px;
    }
    .tab {
        position: relative;
        padding: 0 10px 1px;
    }
    .tab::after {
        content: "";
        position: absolute;
        right: 0;
        top: 4px;
        height: 9px;
        border-right: 1px solid #ccc;
    }
    .tab.current {
        padding: 0 7px 1px;
        background: #fff;
        box-shadow: inset 0 -2px #8b8b8b;
        color: #222;
        font-weight: bold;
    }
    .tab.current::after {
        content: none;
    }

    aside {
        position: relative;
        display: flex;
        flex-direction: column;
        align-items: center;
        gap: 13px;
        width: 39px;
        box-sizing: border-box;
        padding-top: 6px;
        border-left: 1px solid #d5d2cf;
    }
    .handle {
        position: absolute;
        left: -1px;
        top: 268px;
        width: 5px;
        height: 50px;
        background: #949494;
    }
    .handle::after {
        content: "";
        position: absolute;
        left: 1px;
        top: 23px;
        border: 2px solid transparent;
        border-left: 3px solid #fff;
        border-right: 0;
    }
    .panel:nth-child(2) {
        margin-bottom: 1px;
    }
    .panel:nth-child(2) .icon {
        width: 12px;
    }

    footer {
        display: grid;
        grid-template-columns: 22px 159fr 222fr 200fr 214fr 31px 20px 20px 183fr 97px 32px;
        align-items: center;
        height: 17px;
        box-sizing: border-box;
        border-top: 1px solid #cfccc8;
    }
    footer > span {
        display: flex;
        align-items: center;
        height: 12px;
        box-sizing: border-box;
        min-width: 0;
        padding: 0 5px;
        border-right: 1px solid #e2e1df;
        white-space: nowrap;
    }
    footer > .open {
        border-right: 0;
    }
    footer > .language {
        justify-content: center;
        padding-right: 48px;
    }
    .sum {
        justify-content: center;
    }
    .saved {
        width: 11px;
        height: 11px;
    }
    .mode {
        width: 20px;
        height: 12px;
    }
    .zoom {
        gap: 3px;
    }
    .zoom svg {
        width: 8px;
        height: 8px;
    }
    .zoom input {
        flex: 1;
        height: 8px;
        appearance: none;
        background: linear-gradient(#999, #999) center / 100% 1px no-repeat;
    }
    .zoom input::-webkit-slider-thumb {
        appearance: none;
        width: 3px;
        height: 7px;
        border: 1px solid #555;
        background: #ddd;
        box-sizing: border-box;
    }
</style>
